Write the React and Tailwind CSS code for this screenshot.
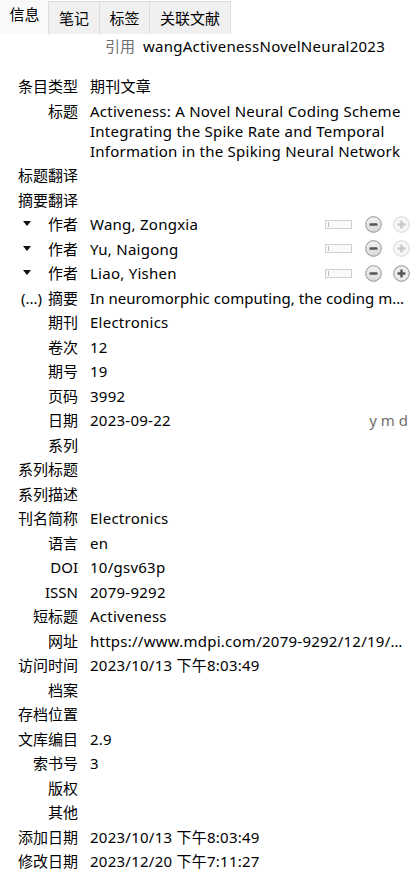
import React from "react";

const font = {
  fontFamily: '"Noto Sans", "Noto Sans CJK SC", sans-serif',
};

function Tabs() {
  const tabs = [
    ["信息", "w-[49px]"],
    ["笔记", "w-[52px]"],
    ["标签", "w-[51px]"],
    ["关联文献", "w-[82px]"],
  ];
  return (
    <div className="flex items-end h-[34px]">
      {tabs.map(([t, w], i) =>
        i === 0 ? (
          <div
            key={t}
            className={w + " h-[34px] pt-[3px] text-center bg-[#f9f9f9] text-[15px] leading-[22px] text-black"}
          >
            {t}
          </div>
        ) : (
          <div
            key={t}
            className={w + " h-[33px] pt-[5px] text-center bg-[#f0f0f0] border border-[#dcdcdc] border-b-0 -ml-px text-[15px] leading-[22px] text-black"}
          >
            {t}
          </div>
        )
      )}
    </div>
  );
}

function Minus() {
  return (
    <svg width="17" height="17" viewBox="0 0 17 17">
      <defs>
        <linearGradient id="gm" x1="0" y1="0" x2="0" y2="1">
          <stop offset="0" stopColor="#f4f4f4" />
          <stop offset="1" stopColor="#d8d8d8" />
        </linearGradient>
      </defs>
      <circle cx="8.5" cy="8.5" r="7.8" fill="url(#gm)" stroke="#8f8f8f" strokeWidth="1" />
      <rect x="4.5" y="7.3" width="8" height="2.4" rx="0.6" fill="#555" />
    </svg>
  );
}

function Plus({ active }) {
  const c = active ? "#555" : "#c8c8c8";
  const s = active ? "#8f8f8f" : "#d4d4d4";
  return (
    <svg width="17" height="17" viewBox="0 0 17 17">
      <circle cx="8.5" cy="8.5" r="7.8" fill={active ? "#ececec" : "#f6f6f6"} stroke={s} strokeWidth="1" />
      <rect x="4.5" y="7.3" width="8" height="2.4" rx="0.6" fill={c} />
      <rect x="7.3" y="4.5" width="2.4" height="8" rx="0.6" fill={c} />
    </svg>
  );
}

function Row({ label, children, left, right, multi, tight }) {
  return (
    <div className="flex py-[2.25px] leading-[20px] text-[15px]">
      <div className="w-[78px] shrink-0 flex justify-end items-start relative">
        {left}
        <span className="whitespace-nowrap">{label}</span>
      </div>
      <div
        className={
          "flex-1 min-w-0 pl-[12px] pr-[10px] " +
          (tight ? "tracking-[0.05px] " : "tracking-[0.25px] ") +
          (multi ? "" : "truncate")
        }
      >
        {children}
      </div>
      {right}
    </div>
  );
}

function Triangle() {
  return (
    <span className="absolute left-[23px] top-[7px] w-0 h-0 border-l-[4.5px] border-r-[4.5px] border-t-[5px] border-l-transparent border-r-transparent border-t-[#111]" />
  );
}

function AuthorControls({ last }) {
  return (
    <div className="flex items-center shrink-0 pr-[10px]">
      <div className="w-[27px] h-[9px] border border-[#cfcfcf] bg-[#fafafa] flex items-center pl-[2px] mr-[13px]">
        <div className="w-px h-[5px] bg-[#bbb]" />
      </div>
      <div className="mr-[11px] flex"><Minus /></div>
      <Plus active={last} />
    </div>
  );
}

export default function App() {
  const authors = ["Wang, Zongxia", "Yu, Naigong", "Liao, Yishen"];
  return (
    <div className="w-[420px] min-h-[883px] bg-white text-black" style={font}>
      <Tabs />
      <div className="flex justify-end pr-[35px] h-[25px] items-center text-[15px] leading-[20px] -mt-[1px]">
        <span className="text-[#707070] mr-[8px]">引用</span>
        <span className="tracking-[0.25px]">wangActivenessNovelNeural2023</span>
      </div>
      <div className="pt-[16px]">
        <Row label="条目类型">期刊文章</Row>
        <Row label="标题" multi>
          Activeness: A Novel Neural Coding Scheme Integrating the Spike Rate and Temporal Information in the Spiking Neural Network
        </Row>
        <Row label="标题翻译" />
        <Row label="摘要翻译" />
        {authors.map((a, i) => (
          <Row key={a} label="作者" left={<Triangle />} right={<AuthorControls last={i === 2} />}>
            {a}
          </Row>
        ))}
        <Row tight label="摘要" left={<span className="absolute left-[21px] top-0">(...)</span>}>
          In neuromorphic computing, the coding method of spike neurons serves as the foundation
        </Row>
        <Row label="期刊">Electronics</Row>
        <Row label="卷次">12</Row>
        <Row label="期号">19</Row>
        <Row label="页码">3992</Row>
        <Row label="日期" right={<span className="pr-[12px] text-[#707070] shrink-0">y m d</span>}>
          2023-09-22
        </Row>
        <Row label="系列" />
        <Row label="系列标题" />
        <Row label="系列描述" />
        <Row label="刊名简称">Electronics</Row>
        <Row label="语言">en</Row>
        <Row label="DOI">10/gsv63p</Row>
        <Row label="ISSN">2079-9292</Row>
        <Row label="短标题">Activeness</Row>
        <Row label="网址">https://www.mdpi.com/2079-9292/12/19/3992</Row>
        <Row label="访问时间">2023/10/13 下午8:03:49</Row>
        <Row label="档案" />
        <Row label="存档位置" />
        <Row label="文库编目">2.9</Row>
        <Row label="索书号">3</Row>
        <Row label="版权" />
        <Row label="其他" />
        <Row label="添加日期">2023/10/13 下午8:03:49</Row>
        <Row label="修改日期">2023/12/20 下午7:11:27</Row>
      </div>
    </div>
  );
}
